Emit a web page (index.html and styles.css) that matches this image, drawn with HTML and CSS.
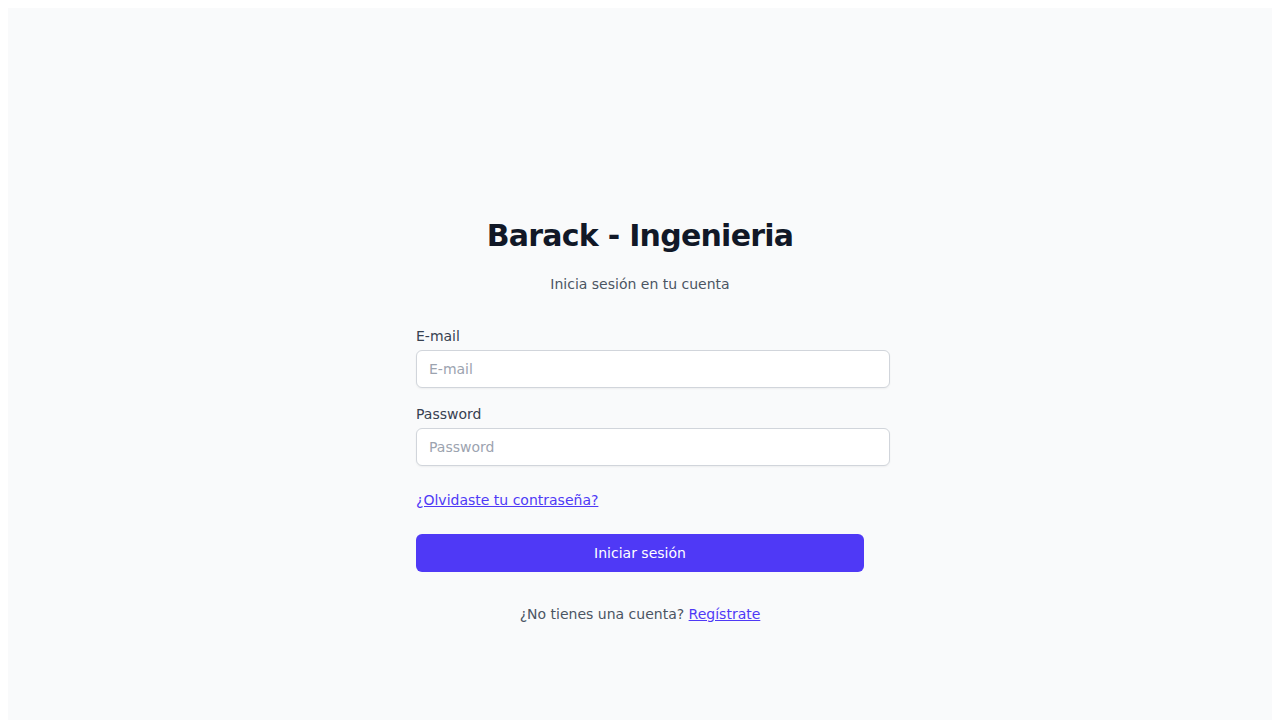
FILE: index.html
```html
<!DOCTYPE html>
<html lang="es">
<head>
<meta charset="utf-8">
<title>Barack - Ingenieria</title>
<link rel="stylesheet" href="styles.css">
</head>
<body>
<div class="page">
  <div class="card">
    <h1 class="title">Barack - Ingenieria</h1>
    <p class="subtitle">Inicia sesión en tu cuenta</p>
    <form class="form">
      <div class="field">
        <label class="label" for="email">E-mail</label>
        <input class="input" id="email" type="email" placeholder="E-mail">
      </div>
      <div class="field">
        <label class="label" for="password">Password</label>
        <input class="input" id="password" type="password" placeholder="Password">
      </div>
      <a class="link forgot" href="#">¿Olvidaste tu contraseña?</a>
      <button class="btn" type="button">Iniciar sesión</button>
    </form>
    <p class="footer">¿No tienes una cuenta? <a class="link" href="#">Regístrate</a></p>
  </div>
</div>
</body>
</html>
```
FILE: styles.css
```css
body {
  margin: 8px;
  font-family: "DejaVu Sans", sans-serif;
}
.page {
  background: #f9fafb;
  min-height: 100vh;
  padding-top: 210px;
  box-sizing: border-box;
}
.card {
  width: 448px;
  margin: 0 auto;
}
.title {
  margin: 0;
  font-size: 30px;
  line-height: 36px;
  font-weight: 700;
  letter-spacing: -0.025em;
  color: #111827;
  text-align: center;
}
.subtitle {
  margin: 20px 0 0;
  font-size: 14px;
  line-height: 20px;
  color: #4b5563;
  text-align: center;
}
.form {
  margin-top: 32px;
  display: flex;
  flex-direction: column;
  align-items: flex-start;
}
.field {
  display: flex;
  flex-direction: column;
  gap: 4px;
  width: 100%;
  margin-bottom: 16px;
}
.field + .field {
  margin-bottom: 24px;
}
.label {
  font-size: 14px;
  line-height: 20px;
  color: #374151;
}
.input {
  width: 100%;
  box-sizing: content-box;
  padding: 8px 12px;
  border: 1px solid #d1d5db;
  border-radius: 6px;
  background: #fff;
  font-family: inherit;
  font-size: 14px;
  line-height: 20px;
  height: 20px;
  color: #111827;
  box-shadow: 0 1px 2px rgba(0, 0, 0, 0.05);
  outline: none;
}
.input::placeholder {
  color: #9ca3af;
}
.link {
  color: #4f39f6;
  text-decoration: underline;
}
.forgot {
  font-size: 14px;
  line-height: 20px;
}
.btn {
  margin-top: 24px;
  width: 100%;
  height: 38px;
  border: none;
  border-radius: 6px;
  background: #4f39f6;
  color: #fff;
  font-family: inherit;
  font-size: 14px;
  line-height: 20px;
  cursor: pointer;
}
.footer {
  margin: 32px 0 0;
  font-size: 14px;
  line-height: 20px;
  color: #4b5563;
  text-align: center;
}
```
